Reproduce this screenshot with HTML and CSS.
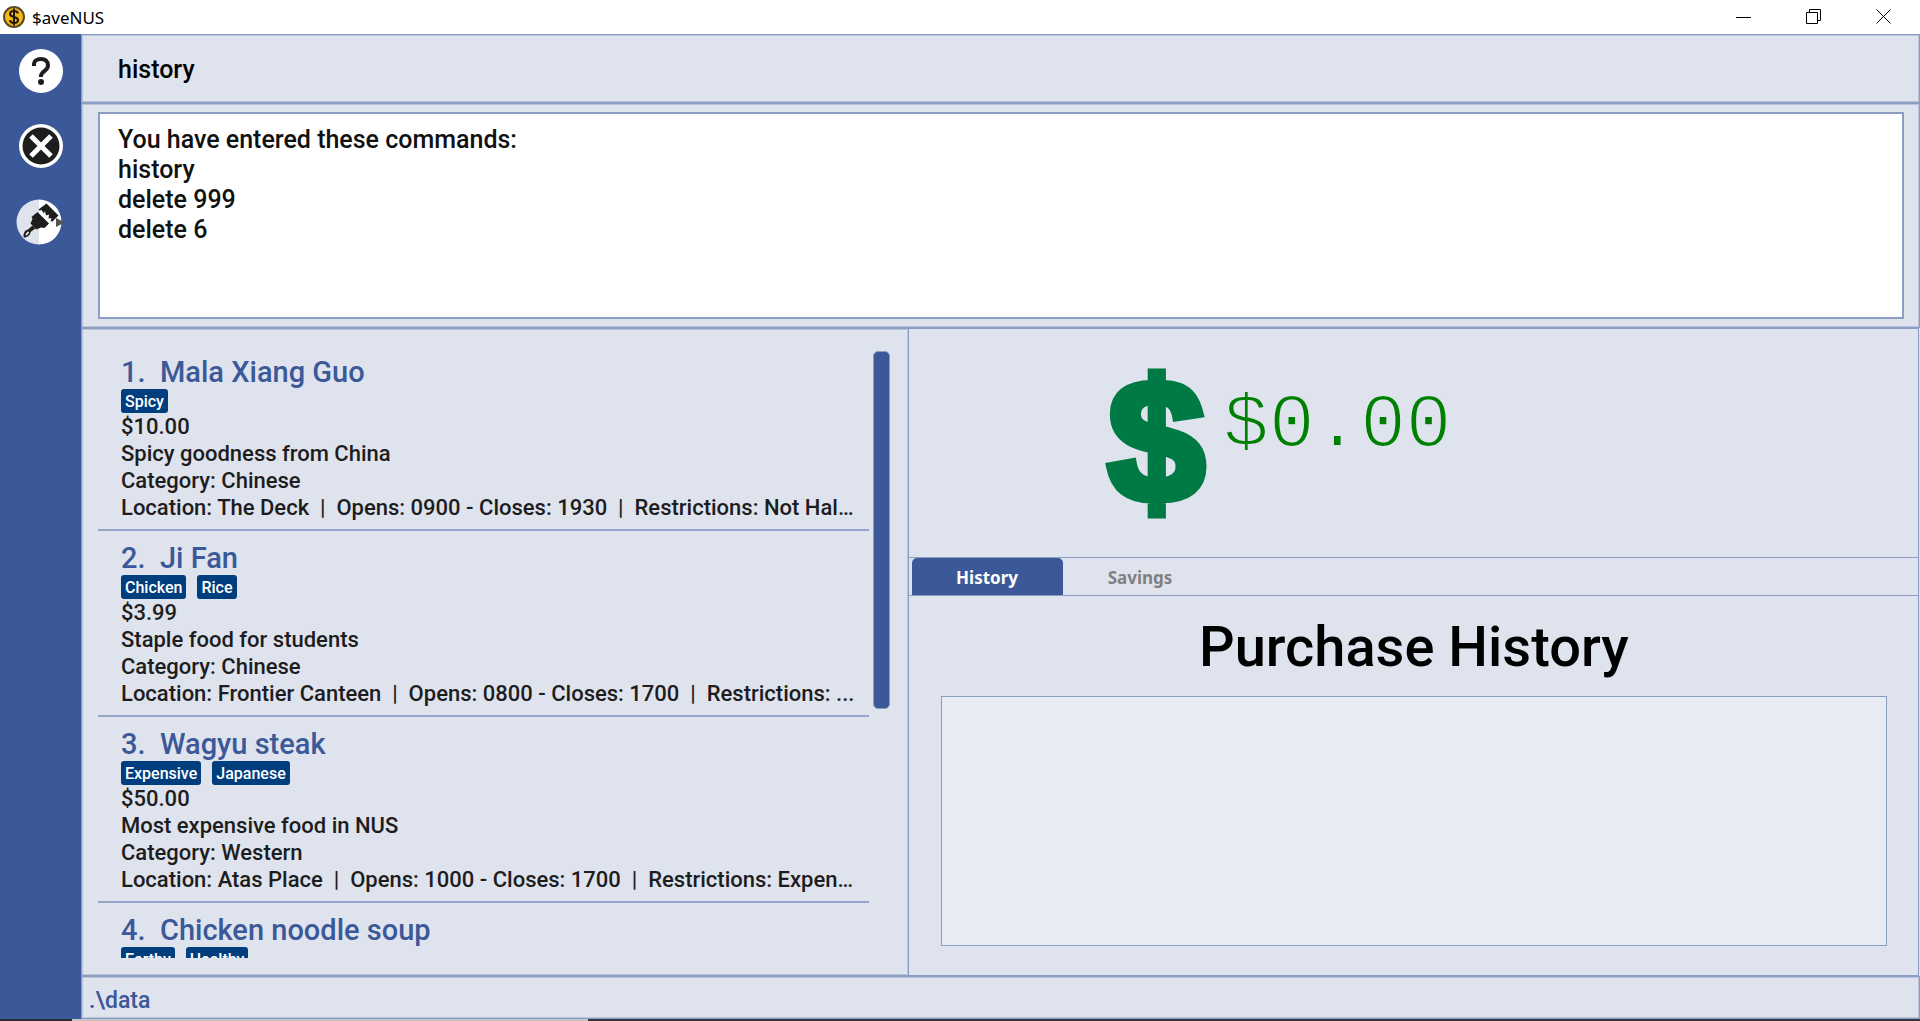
FILE: index.html
```html
<!DOCTYPE html>
<html lang="en">
<head>
<meta charset="utf-8">
<title>$aveNUS</title>
<link rel="stylesheet" href="styles.css">
</head>
<body>
<div class="window">
  <header class="titlebar">
    <svg class="coin" viewBox="0 0 22 22" aria-hidden="true">
      <circle cx="11" cy="11" r="10" fill="#f5b914" stroke="#5b4a2a" stroke-width="2"/>
      <path d="M15 7.500C14.500 5.800 13 5 11 5 8.800 5 7 6 7 8c0 4 8 2 8 6 0 2-1.800 3-4 3s-3.700-.9-4-2.800M11 2.500v17" fill="none" stroke="#1b1710" stroke-width="2"/>
    </svg>
    <span class="titlebar-name">$aveNUS</span>
    <div class="window-controls">
      <button type="button" aria-label="Minimize"><svg viewBox="0 0 16 16"><path d="M0 8.500h15"/></svg></button>
      <button type="button" aria-label="Restore"><svg viewBox="0 0 16 16"><path d="M.5 3.500h11v11H.5zM3.500 3.500v-3h11v11h-3"/></svg></button>
      <button type="button" aria-label="Close"><svg viewBox="0 0 16 16"><path d="M.5.500l14 14M14.500.500l-14 14"/></svg></button>
    </div>
  </header>

  <div class="app">
    <nav class="sidebar" aria-label="Menu">
      <button type="button" aria-label="Help">
        <svg viewBox="0 0 44 44">
          <circle cx="22" cy="22" r="22" fill="#fff"/>
          <path d="M15 17v-2c0-3 3-5 7-5s7 2 7 6.500c0 5.500-7 5.500-7 10.500v1" fill="none" stroke="#1d1d1d" stroke-width="4"/>
          <circle cx="22" cy="33" r="3" fill="#1d1d1d"/>
        </svg>
      </button>
      <button type="button" aria-label="Exit">
        <svg viewBox="0 0 44 44">
          <circle cx="22" cy="22" r="22" fill="#fff"/>
          <circle cx="22" cy="22" r="18.500" fill="#1d1d1d"/>
          <path d="M12 12l20 20M32 12L12 32" stroke="#fff" stroke-width="5"/>
        </svg>
      </button>
      <button type="button" class="theme-button" aria-label="Theme">
        <svg viewBox="0 0 50 46">
          <path d="M23 .5a22.500 22.500 0 0 0 0 45z" fill="#dfe3ee"/>
          <path d="M23 .5a22.500 22.500 0 0 1 0 45z" fill="#fff"/>
          <path d="M30.500 4.500L42.500 16.500 35.500 23.500 22.500 10.500z" fill="#1d1d1d"/>
          <path d="M23.500 13l1.500-2.500 3 4 1-2.500 1 4.500 3-1-.5 4 3-.5-1 3.500 2-.5-2 3z" fill="#fff"/>
          <path d="M21.500 13L33 24.500 28.500 29 25 28.500 20.500 30.500 14.500 24.500 16.500 20 15.500 18z" fill="#1d1d1d"/>
          <path d="M16.500 26.500l3 3-5 3.500c0 3-3 5.500-6.500 5.500-1.500-2.500.500-7.500 4-8z" fill="#1d1d1d"/>
          <path d="M10.500 35.500l1.500-2" stroke="#dfe3ee" stroke-width="2" stroke-linecap="round"/>
          <path d="M40 19l9 4.500-9 4.500z" fill="#555"/>
        </svg>
      </button>
    </nav>

    <main class="content">
      <form class="panel command-panel">
        <input class="command" type="text" aria-label="Command" value="history">
      </form>

      <section class="panel result-panel">
        <textarea class="result" aria-label="Result" readonly>You have entered these commands:
history
delete 999
delete 6</textarea>
      </section>

      <div class="columns">
        <section class="panel food-panel">
          <ol class="food-list">
            <li class="food">
              <h2>1.&nbsp; Mala Xiang Guo</h2>
              <div class="tags"><span>Spicy</span></div>
              <p>$10.00</p>
              <p>Spicy goodness from China</p>
              <p>Category: Chinese</p>
              <p>Location: The Deck&nbsp; |&nbsp; Opens: 0900 - Closes: 1930&nbsp; |&nbsp; Restrictions: Not Hal...</p>
            </li>
            <li class="food">
              <h2>2.&nbsp; Ji Fan</h2>
              <div class="tags"><span>Chicken</span><span>Rice</span></div>
              <p>$3.99</p>
              <p>Staple food for students</p>
              <p>Category: Chinese</p>
              <p>Location: Frontier Canteen&nbsp; |&nbsp; Opens: 0800 - Closes: 1700&nbsp; |&nbsp; Restrictions: ...</p>
            </li>
            <li class="food">
              <h2>3.&nbsp; Wagyu steak</h2>
              <div class="tags"><span>Expensive</span><span>Japanese</span></div>
              <p>$50.00</p>
              <p>Most expensive food in NUS</p>
              <p>Category: Western</p>
              <p>Location: Atas Place&nbsp; |&nbsp; Opens: 1000 - Closes: 1700&nbsp; |&nbsp; Restrictions: Expen...</p>
            </li>
            <li class="food">
              <h2>4.&nbsp; Chicken noodle soup</h2>
              <div class="tags"><span>Earthy</span><span>Healthy</span></div>
            </li>
          </ol>
          <div class="scrollbar"><div class="thumb"></div></div>
        </section>

        <section class="side">
          <div class="balance">
            <span class="dollar" aria-hidden="true">$</span>
            <span class="amount">$0.00</span>
          </div>
          <div class="tabs" role="tablist">
            <button type="button" role="tab" class="tab selected" aria-selected="true">History</button>
            <button type="button" role="tab" class="tab" aria-selected="false">Savings</button>
          </div>
          <div class="history">
            <h1>Purchase History</h1>
            <div class="purchases"></div>
          </div>
        </section>
      </div>

      <footer class="panel status">.\data</footer>
    </main>
  </div>
  <div class="desktop-edge"></div>
</div>
</body>
</html>
```
FILE: styles.css
```css
:root {
  --blue: #3b5998;
  --line: #8b9dc3;
  --line-soft: #b9c3db;
  --bg: #dfe3ee;
  --tag: #003e7e;
}

* { box-sizing: border-box; }

body {
  margin: 0;
  background: var(--bg);
  color: #1d1d1d;
  font-family: Roboto, "Liberation Sans", sans-serif;
  font-weight: 500;
}

h1, h2, p, ol { margin: 0; padding: 0; }

button {
  border: 0;
  padding: 0;
  background: none;
  font: inherit;
}

svg { display: block; }

.window {
  display: flex;
  flex-direction: column;
  height: 100vh;
}

.titlebar {
  display: flex;
  align-items: center;
  flex: none;
  height: 34px;
  padding: 0 1px 0 3px;
  background: #fff;
  color: #000;
}

.coin { width: 22px; height: 22px; }

.titlebar-name {
  margin-left: 7px;
  font: 400 17px "Noto Sans", sans-serif;
}

.window-controls {
  display: flex;
  margin-left: auto;
}

.window-controls button {
  display: grid;
  place-items: center;
  width: 70px;
  height: 34px;
}

.window-controls svg {
  width: 16px;
  height: 16px;
  fill: none;
  stroke: #000;
}

.app {
  display: flex;
  flex: 1;
  min-height: 0;
}

.sidebar {
  display: flex;
  flex: none;
  flex-direction: column;
  align-items: center;
  gap: 31px;
  width: 81px;
  padding-top: 15px;
  background: var(--blue);
}

.sidebar svg { width: 44px; height: 44px; }

.sidebar .theme-button svg { width: 50px; height: 46px; }

.content {
  display: flex;
  flex: 1;
  flex-direction: column;
  min-width: 0;
}

.panel {
  border: 1px solid var(--line);
  box-shadow: inset 0 0 0 1px var(--line-soft);
}

.command-panel {
  display: flex;
  flex: none;
  height: 69px;
}

.command {
  flex: 1;
  border: 0;
  padding: 2px 36px 0;
  background: none;
  color: #000;
  font: inherit;
  font-size: 25px;
  outline: 0;
}

.result-panel {
  display: flex;
  flex: none;
  height: 225px;
  padding: 8px 15px 8px 16px;
}

.result {
  flex: 1;
  border: 2px solid var(--line);
  padding: 11px 18px 9px;
  background: #fff;
  color: #111;
  font: inherit;
  font-size: 25px;
  line-height: 30px;
  outline: 0;
  resize: none;
}

.columns {
  display: grid;
  flex: 1;
  grid-template-columns: 9fr 11fr;
  min-height: 0;
}

.food-panel {
  display: flex;
  gap: 4px;
  min-width: 0;
  min-height: 0;
  padding: 16px 18px 17px 16px;
}

.food-list {
  flex: 1;
  min-width: 0;
  overflow: hidden;
  list-style: none;
}

.food {
  border-bottom: 2px solid #93a4c8;
  padding: 10px 14px 8px 23px;
}

.food h2 {
  color: var(--blue);
  font-size: 29px;
  font-weight: 500;
  line-height: 34px;
}

.food p {
  overflow: hidden;
  font-size: 22px;
  line-height: 27px;
  text-overflow: ellipsis;
  white-space: nowrap;
}

.tags { display: flex; gap: 11px; }

.tags span {
  border-radius: 3px;
  padding: 1px 4px 0;
  background: var(--tag);
  color: #fff;
  font-size: 16px;
  line-height: 23px;
}

.scrollbar {
  flex: none;
  width: 17px;
  padding-top: 6px;
}

.thumb {
  height: 59%;
  border: 1px solid var(--line);
  border-radius: 5px;
  background: var(--blue);
}

.side {
  display: flex;
  flex-direction: column;
  min-width: 0;
  margin-right: 1px;
  border: 1px solid var(--line);
  border-left: 0;
}

.balance {
  display: flex;
  flex: none;
  height: 229px;
  border-bottom: 1px solid var(--line);
  padding: 32px 0 0 19%;
}

.dollar {
  width: 123px;
  padding-left: 8px;
  color: #007a45;
  font: 700 173px/160px "Liberation Sans", sans-serif;
  -webkit-text-stroke: 9px #007a45;
}

/* The outline in the background colour thins the strokes of the digits. */
.amount {
  color: #008000;
  font: 400 76px/130px "Liberation Mono", monospace;
  -webkit-text-stroke: 2px var(--bg);
}

.tabs {
  display: flex;
  gap: 2px;
  flex: none;
  height: 38px;
  border-bottom: 1px solid var(--line);
  padding-left: 3px;
}

.tab {
  width: 151px;
  border-radius: 5px 5px 0 0;
  padding-top: 1px;
  color: #808080;
  font: 700 17px "Noto Sans", sans-serif;
}

.tab.selected {
  background: var(--blue);
  color: #fff;
}

.history {
  display: flex;
  flex: 1;
  flex-direction: column;
  padding: 17px 31px 29px 32px;
}

.history h1 {
  color: #000;
  font-size: 56px;
  font-weight: 500;
  line-height: 68px;
  text-align: center;
}

.purchases {
  flex: 1;
  margin-top: 15px;
  border: 1px solid var(--line);
  background: #e8ebf4;
}

.status {
  flex: none;
  height: 43px;
  padding-left: 7px;
  color: var(--blue);
  font-size: 23px;
  line-height: 48px;
}

.desktop-edge {
  flex: none;
  height: 2px;
  background: linear-gradient(90deg, #2b2b33 72px, #c4c4c4 72px, #c4c4c4 588px, #35353d 588px);
}
```
